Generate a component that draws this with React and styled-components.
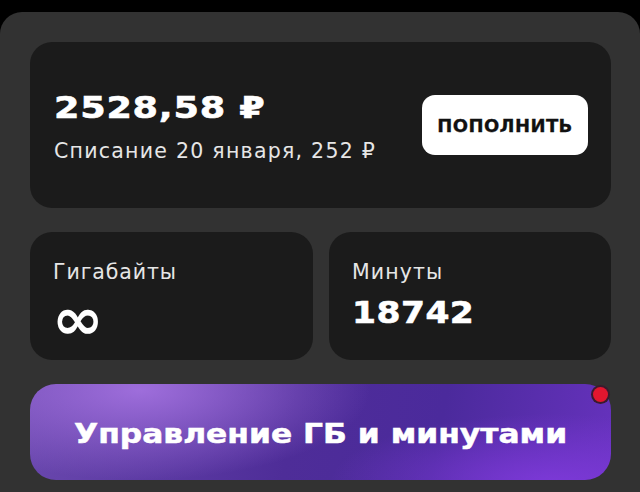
import styled, { createGlobalStyle } from "styled-components";

const Global = createGlobalStyle`
  html, body {
    margin: 0;
    padding: 0;
    background: #000;
  }
  body {
    font-family: "DejaVu Sans", sans-serif;
    color: #fff;
  }
`;

const Screen = styled.div`
  width: 640px;
  height: 492px;
  padding-top: 12px;
  box-sizing: border-box;
  overflow: hidden;
`;

const Panel = styled.div`
  background: #323232;
  border-radius: 22px 22px 0 0;
  padding: 30px 29px 0 30px;
  height: 100%;
  box-sizing: border-box;
  display: flex;
  flex-direction: column;
  gap: 24px;
`;

const Card = styled.div`
  background: #1b1b1b;
  border-radius: 22px;
  box-sizing: border-box;
`;

const BalanceCard = styled(Card)`
  height: 166px;
  display: flex;
  align-items: center;
  justify-content: space-between;
  padding: 0 23px 0 24px;
`;

// wide heavy digits, stretched horizontally
const Wide = styled.div`
  font-family: "DejaVu Sans", sans-serif;
  font-weight: 700;
  color: #fff;
  font-size: ${(p) => p.$size}px;
  letter-spacing: ${(p) => p.$spacing || 0}px;
  line-height: 1;
  transform: scaleX(${(p) => p.$scale || 1});
  transform-origin: left center;
  white-space: nowrap;
  -webkit-text-stroke: 0.6px #fff;
`;

const Sub = styled.div`
  font-family: "DejaVu Sans", sans-serif;
  font-size: 20.5px;
  letter-spacing: ${(p) => p.$spacing || 1.1}px;
  color: #e6e6e6;
  line-height: 1;
  white-space: nowrap;
`;

const BalanceText = styled.div`
  display: flex;
  flex-direction: column;
  gap: 18px;
  padding-top: 4px;
`;

const TopUp = styled.button`
  background: #fff;
  border: none;
  border-radius: 13px;
  width: 166px;
  height: 60px;
  color: #111;
  font-family: "DejaVu Sans", sans-serif;
  font-weight: 700;
  font-size: 18px;
  letter-spacing: 0.4px;
  padding: 0;
  cursor: pointer;
  -webkit-text-stroke: 0.3px #111;
`;

const Row = styled.div`
  display: grid;
  grid-template-columns: 283px 282px;
  gap: 16px;
`;

const StatCard = styled(Card)`
  height: 128px;
  padding: 30px 24px 0 23px;
  display: flex;
  flex-direction: column;
  gap: ${(p) => p.$gap}px;
`;

const Infinity = styled.div`
  font-family: "DejaVu Sans", sans-serif;
  font-size: 58px;
  font-weight: 700;
  line-height: 1;
  margin-left: -1px;
  transform: scaleX(1.07);
  transform-origin: left center;
`;

const ManageWrap = styled.div`
  position: relative;
`;

const Manage = styled.button`
  width: 100%;
  height: 96px;
  border: none;
  border-radius: 26px;
  background:
    radial-gradient(ellipse 230px 90px at 110px 6px, rgba(165, 115, 225, 0.9), rgba(165, 115, 225, 0) 100%),
    radial-gradient(ellipse 220px 70px at 520px 100px, rgba(128, 58, 220, 0.9), rgba(128, 58, 220, 0) 100%),
    linear-gradient(100deg, #6a48ae 0%, #4e2d98 45%, #4b2a9c 70%, #6632bd 100%);
  color: #fff;
  padding: 0;
  display: flex;
  align-items: center;
  justify-content: center;
`;

const ManageLabel = styled.span`
  display: inline-block;
  font-family: "DejaVu Sans", sans-serif;
  font-weight: 700;
  font-size: 27px;
  transform: scaleX(1.16);
  white-space: nowrap;
  -webkit-text-stroke: 0.5px #fff;
  margin-top: 2px;
`;

const Dot = styled.span`
  position: absolute;
  top: 3px;
  right: 3px;
  width: 15px;
  height: 15px;
  border-radius: 50%;
  background: #e3162f;
  box-shadow: 0 0 0 2px #3b1b2e;
`;

export default function App() {
  return (
    <Screen>
      <Global />
      <Panel>
        <BalanceCard>
          <BalanceText>
            <Wide $size={30} $spacing={0.6} $scale={1.22}>2528,58 ₽</Wide>
            <Sub $spacing={1.25}>Списание 20 января, 252 ₽</Sub>
          </BalanceText>
          <TopUp>ПОПОЛНИТЬ</TopUp>
        </BalanceCard>
        <Row>
          <StatCard $gap={7}>
            <Sub $spacing={0.9}>Гигабайты</Sub>
            <Infinity>∞</Infinity>
          </StatCard>
          <StatCard $gap={15}>
            <Sub>Минуты</Sub>
            <Wide $size={30} $spacing={0.4} $scale={1.15}>18742</Wide>
          </StatCard>
        </Row>
        <ManageWrap>
          <Manage>
            <ManageLabel>Управление ГБ и минутами</ManageLabel>
          </Manage>
          <Dot />
        </ManageWrap>
      </Panel>
    </Screen>
  );
}
